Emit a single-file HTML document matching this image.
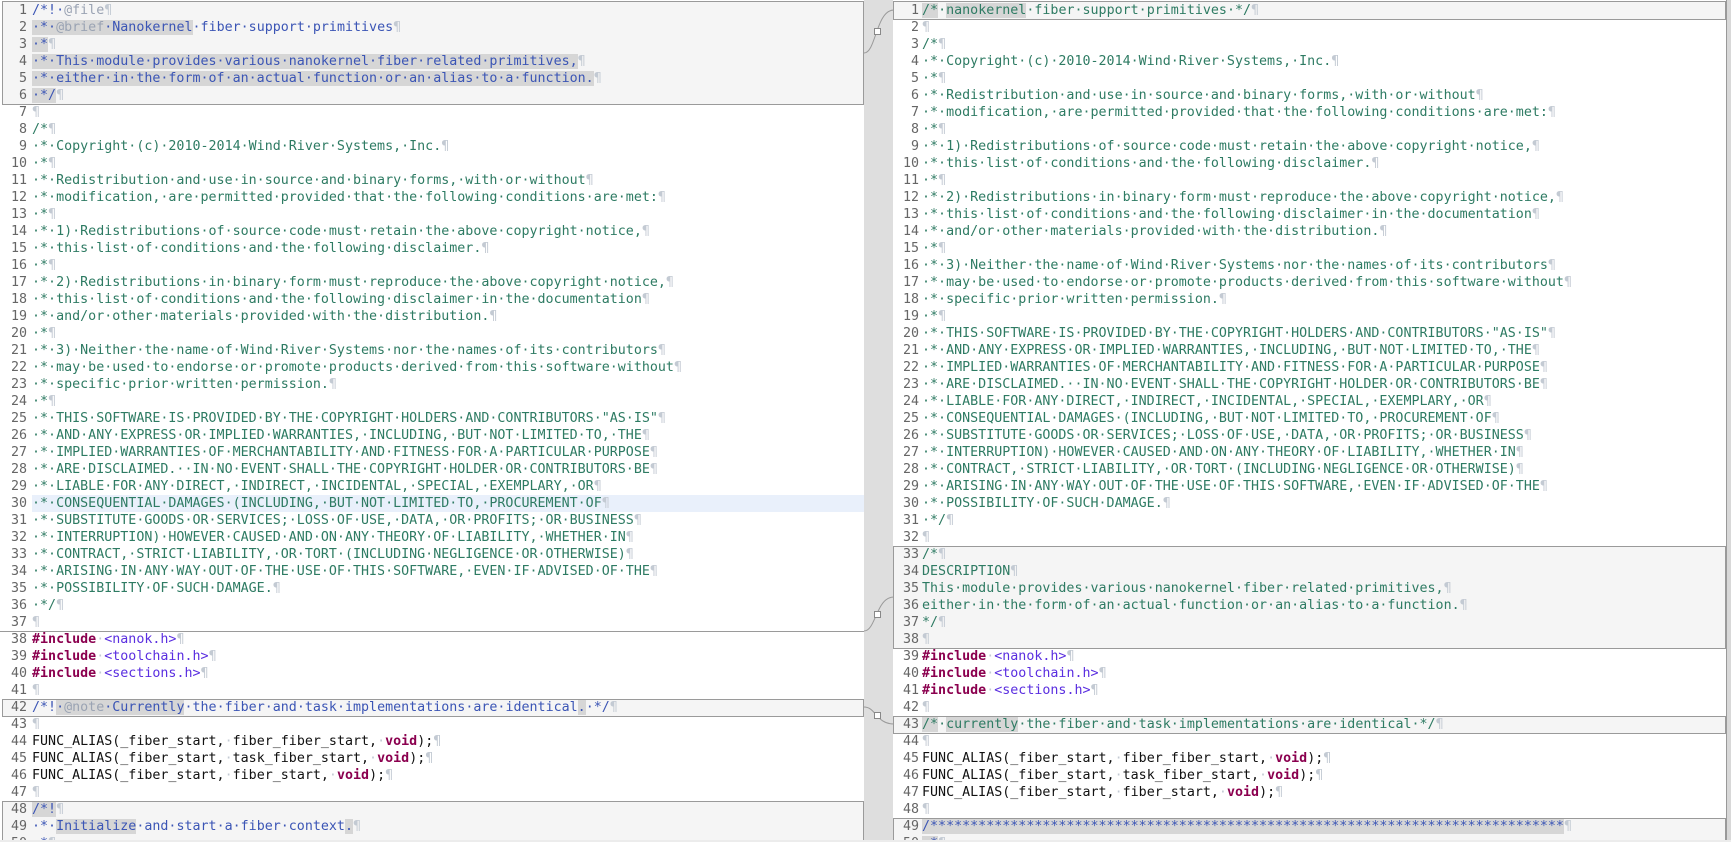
<!DOCTYPE html>
<html><head><meta charset="utf-8">
<style>
html,body{margin:0;padding:0;width:1731px;height:842px;overflow:hidden;background:#fff;}
body{position:relative;font-family:"DejaVu Sans Mono","Liberation Mono",monospace;font-size:13.33px;}
.pane{position:absolute;top:0;height:842px;overflow:hidden;background:#fff;}
.row{position:absolute;left:0;right:0;height:17px;line-height:17px;white-space:pre;}
.n{position:absolute;text-align:right;color:#666;}
.t{position:absolute;}
.c{color:#2e7b63}
.d{color:#3b55b5}
.g{color:#9aa3b3}
.p{color:#c3cad3}
.h{background:#d6d6d6}
.k{color:#8b004f;font-weight:bold}
.s{color:#5a2ee0}
.b{color:#111}
.box{position:absolute;background:#f5f5f5;border:1px solid #9a9a9a;box-sizing:border-box;}
#L .n{left:0;width:27px}
#L .t{left:32px}
#R .n{left:0;width:26px}
#R .t{left:29px}
</style></head><body>
<div style="position:absolute;left:862px;top:0;width:32px;height:842px;background:#dedede;border-left:1px solid #aaa;box-sizing:border-box"></div>
<svg style="position:absolute;left:862px;top:0" width="33" height="842">
<path d="M2 53 C14 53 14 10 32 10" stroke="#999" fill="none"/>
<rect x="12.5" y="28.5" width="6" height="6" fill="#fff" stroke="#888"/>
<path d="M2 631 C14 631 14 597 32 597" stroke="#999" fill="none"/>
<rect x="12.5" y="611.5" width="6" height="6" fill="#fff" stroke="#888"/>
<path d="M2 707 C14 707 14 724 32 724" stroke="#999" fill="none"/>
<rect x="12.5" y="712.5" width="6" height="6" fill="#fff" stroke="#888"/>
</svg>

<div class="pane" id="L" style="left:0;width:864px">
<div class="box" style="left:2px;top:1px;width:862px;height:104px"></div>
<div style="position:absolute;left:0;top:631px;width:864px;height:1px;background:#9a9a9a"></div>
<div class="box" style="left:2px;top:699px;width:862px;height:18px"></div>
<div class="box" style="left:2px;top:801px;width:862px;height:60px"></div>
<div style="position:absolute;left:32px;top:495px;width:832px;height:17px;background:#e9f0fb"></div>

<div class="row" style="top:2px"><span class="n">1</span><span class="t d">/*!·<span class="g">@file</span><span class="p">¶</span></span></div>
<div class="row" style="top:19px"><span class="n">2</span><span class="t d"><span class="h">·*·<span class="g">@brief</span>·Nanokernel</span>·fiber·support·primitives<span class="p">¶</span></span></div>
<div class="row" style="top:36px"><span class="n">3</span><span class="t d"><span class="h">·*</span><span class="p">¶</span></span></div>
<div class="row" style="top:53px"><span class="n">4</span><span class="t d"><span class="h">·*·This·module·provides·various·nanokernel·fiber·related·primitives,</span><span class="p">¶</span></span></div>
<div class="row" style="top:70px"><span class="n">5</span><span class="t d"><span class="h">·*·either·in·the·form·of·an·actual·function·or·an·alias·to·a·function.</span><span class="p">¶</span></span></div>
<div class="row" style="top:87px"><span class="n">6</span><span class="t d"><span class="h">·*/</span><span class="p">¶</span></span></div>
<div class="row" style="top:104px"><span class="n">7</span><span class="t"><span class="p">¶</span></span></div>
<div class="row" style="top:121px"><span class="n">8</span><span class="t c">/*<span class="p">¶</span></span></div>
<div class="row" style="top:138px"><span class="n">9</span><span class="t c">·*·Copyright·(c)·2010-2014·Wind·River·Systems,·Inc.<span class="p">¶</span></span></div>
<div class="row" style="top:155px"><span class="n">10</span><span class="t c">·*<span class="p">¶</span></span></div>
<div class="row" style="top:172px"><span class="n">11</span><span class="t c">·*·Redistribution·and·use·in·source·and·binary·forms,·with·or·without<span class="p">¶</span></span></div>
<div class="row" style="top:189px"><span class="n">12</span><span class="t c">·*·modification,·are·permitted·provided·that·the·following·conditions·are·met:<span class="p">¶</span></span></div>
<div class="row" style="top:206px"><span class="n">13</span><span class="t c">·*<span class="p">¶</span></span></div>
<div class="row" style="top:223px"><span class="n">14</span><span class="t c">·*·1)·Redistributions·of·source·code·must·retain·the·above·copyright·notice,<span class="p">¶</span></span></div>
<div class="row" style="top:240px"><span class="n">15</span><span class="t c">·*·this·list·of·conditions·and·the·following·disclaimer.<span class="p">¶</span></span></div>
<div class="row" style="top:257px"><span class="n">16</span><span class="t c">·*<span class="p">¶</span></span></div>
<div class="row" style="top:274px"><span class="n">17</span><span class="t c">·*·2)·Redistributions·in·binary·form·must·reproduce·the·above·copyright·notice,<span class="p">¶</span></span></div>
<div class="row" style="top:291px"><span class="n">18</span><span class="t c">·*·this·list·of·conditions·and·the·following·disclaimer·in·the·documentation<span class="p">¶</span></span></div>
<div class="row" style="top:308px"><span class="n">19</span><span class="t c">·*·and/or·other·materials·provided·with·the·distribution.<span class="p">¶</span></span></div>
<div class="row" style="top:325px"><span class="n">20</span><span class="t c">·*<span class="p">¶</span></span></div>
<div class="row" style="top:342px"><span class="n">21</span><span class="t c">·*·3)·Neither·the·name·of·Wind·River·Systems·nor·the·names·of·its·contributors<span class="p">¶</span></span></div>
<div class="row" style="top:359px"><span class="n">22</span><span class="t c">·*·may·be·used·to·endorse·or·promote·products·derived·from·this·software·without<span class="p">¶</span></span></div>
<div class="row" style="top:376px"><span class="n">23</span><span class="t c">·*·specific·prior·written·permission.<span class="p">¶</span></span></div>
<div class="row" style="top:393px"><span class="n">24</span><span class="t c">·*<span class="p">¶</span></span></div>
<div class="row" style="top:410px"><span class="n">25</span><span class="t c">·*·THIS·SOFTWARE·IS·PROVIDED·BY·THE·COPYRIGHT·HOLDERS·AND·CONTRIBUTORS·"AS·IS"<span class="p">¶</span></span></div>
<div class="row" style="top:427px"><span class="n">26</span><span class="t c">·*·AND·ANY·EXPRESS·OR·IMPLIED·WARRANTIES,·INCLUDING,·BUT·NOT·LIMITED·TO,·THE<span class="p">¶</span></span></div>
<div class="row" style="top:444px"><span class="n">27</span><span class="t c">·*·IMPLIED·WARRANTIES·OF·MERCHANTABILITY·AND·FITNESS·FOR·A·PARTICULAR·PURPOSE<span class="p">¶</span></span></div>
<div class="row" style="top:461px"><span class="n">28</span><span class="t c">·*·ARE·DISCLAIMED.··IN·NO·EVENT·SHALL·THE·COPYRIGHT·HOLDER·OR·CONTRIBUTORS·BE<span class="p">¶</span></span></div>
<div class="row" style="top:478px"><span class="n">29</span><span class="t c">·*·LIABLE·FOR·ANY·DIRECT,·INDIRECT,·INCIDENTAL,·SPECIAL,·EXEMPLARY,·OR<span class="p">¶</span></span></div>
<div class="row" style="top:495px"><span class="n">30</span><span class="t c">·*·CONSEQUENTIAL·DAMAGES·(INCLUDING,·BUT·NOT·LIMITED·TO,·PROCUREMENT·OF<span class="p">¶</span></span></div>
<div class="row" style="top:512px"><span class="n">31</span><span class="t c">·*·SUBSTITUTE·GOODS·OR·SERVICES;·LOSS·OF·USE,·DATA,·OR·PROFITS;·OR·BUSINESS<span class="p">¶</span></span></div>
<div class="row" style="top:529px"><span class="n">32</span><span class="t c">·*·INTERRUPTION)·HOWEVER·CAUSED·AND·ON·ANY·THEORY·OF·LIABILITY,·WHETHER·IN<span class="p">¶</span></span></div>
<div class="row" style="top:546px"><span class="n">33</span><span class="t c">·*·CONTRACT,·STRICT·LIABILITY,·OR·TORT·(INCLUDING·NEGLIGENCE·OR·OTHERWISE)<span class="p">¶</span></span></div>
<div class="row" style="top:563px"><span class="n">34</span><span class="t c">·*·ARISING·IN·ANY·WAY·OUT·OF·THE·USE·OF·THIS·SOFTWARE,·EVEN·IF·ADVISED·OF·THE<span class="p">¶</span></span></div>
<div class="row" style="top:580px"><span class="n">35</span><span class="t c">·*·POSSIBILITY·OF·SUCH·DAMAGE.<span class="p">¶</span></span></div>
<div class="row" style="top:597px"><span class="n">36</span><span class="t c">·*/<span class="p">¶</span></span></div>
<div class="row" style="top:614px"><span class="n">37</span><span class="t"><span class="p">¶</span></span></div>
<div class="row" style="top:631px"><span class="n">38</span><span class="t"><span class="k">#include</span><span class="p">·</span><span class="s">&lt;nanok.h&gt;</span><span class="p">¶</span></span></div>
<div class="row" style="top:648px"><span class="n">39</span><span class="t"><span class="k">#include</span><span class="p">·</span><span class="s">&lt;toolchain.h&gt;</span><span class="p">¶</span></span></div>
<div class="row" style="top:665px"><span class="n">40</span><span class="t"><span class="k">#include</span><span class="p">·</span><span class="s">&lt;sections.h&gt;</span><span class="p">¶</span></span></div>
<div class="row" style="top:682px"><span class="n">41</span><span class="t"><span class="p">¶</span></span></div>
<div class="row" style="top:699px"><span class="n">42</span><span class="t d">/*!<span class="h">·<span class="g">@note</span>·Currently</span>·the·fiber·and·task·implementations·are·identical<span class="h">.</span>·*/<span class="p">¶</span></span></div>
<div class="row" style="top:716px"><span class="n">43</span><span class="t"><span class="p">¶</span></span></div>
<div class="row" style="top:733px"><span class="n">44</span><span class="t b">FUNC_ALIAS(_fiber_start,<span class="p">·</span>fiber_fiber_start,<span class="p">·</span><span class="k">void</span>);<span class="p">¶</span></span></div>
<div class="row" style="top:750px"><span class="n">45</span><span class="t b">FUNC_ALIAS(_fiber_start,<span class="p">·</span>task_fiber_start,<span class="p">·</span><span class="k">void</span>);<span class="p">¶</span></span></div>
<div class="row" style="top:767px"><span class="n">46</span><span class="t b">FUNC_ALIAS(_fiber_start,<span class="p">·</span>fiber_start,<span class="p">·</span><span class="k">void</span>);<span class="p">¶</span></span></div>
<div class="row" style="top:784px"><span class="n">47</span><span class="t"><span class="p">¶</span></span></div>
<div class="row" style="top:801px"><span class="n">48</span><span class="t d"><span class="h">/*!</span><span class="p">¶</span></span></div>
<div class="row" style="top:818px"><span class="n">49</span><span class="t d">·*·<span class="h">Initialize</span>·and·start·a·fiber·context<span class="h">.</span><span class="p">¶</span></span></div>
<div class="row" style="top:835px"><span class="n">50</span><span class="t d">·*<span class="p">¶</span></span></div>
</div>

<div class="pane" id="R" style="left:893px;width:834px;border-right:1px solid #999;box-sizing:border-box">
<div class="box" style="left:0;top:1px;width:833px;height:19px"></div>
<div class="box" style="left:0;top:546px;width:833px;height:103px"></div>
<div class="box" style="left:0;top:716px;width:833px;height:18px"></div>
<div class="box" style="left:0;top:818px;width:833px;height:40px"></div>

<div class="row" style="top:2px"><span class="n">1</span><span class="t c"><span class="h">/*</span>·<span class="h">nanokernel</span>·fiber·support·primitives·*/<span class="p">¶</span></span></div>
<div class="row" style="top:19px"><span class="n">2</span><span class="t"><span class="p">¶</span></span></div>
<div class="row" style="top:36px"><span class="n">3</span><span class="t c">/*<span class="p">¶</span></span></div>
<div class="row" style="top:53px"><span class="n">4</span><span class="t c">·*·Copyright·(c)·2010-2014·Wind·River·Systems,·Inc.<span class="p">¶</span></span></div>
<div class="row" style="top:70px"><span class="n">5</span><span class="t c">·*<span class="p">¶</span></span></div>
<div class="row" style="top:87px"><span class="n">6</span><span class="t c">·*·Redistribution·and·use·in·source·and·binary·forms,·with·or·without<span class="p">¶</span></span></div>
<div class="row" style="top:104px"><span class="n">7</span><span class="t c">·*·modification,·are·permitted·provided·that·the·following·conditions·are·met:<span class="p">¶</span></span></div>
<div class="row" style="top:121px"><span class="n">8</span><span class="t c">·*<span class="p">¶</span></span></div>
<div class="row" style="top:138px"><span class="n">9</span><span class="t c">·*·1)·Redistributions·of·source·code·must·retain·the·above·copyright·notice,<span class="p">¶</span></span></div>
<div class="row" style="top:155px"><span class="n">10</span><span class="t c">·*·this·list·of·conditions·and·the·following·disclaimer.<span class="p">¶</span></span></div>
<div class="row" style="top:172px"><span class="n">11</span><span class="t c">·*<span class="p">¶</span></span></div>
<div class="row" style="top:189px"><span class="n">12</span><span class="t c">·*·2)·Redistributions·in·binary·form·must·reproduce·the·above·copyright·notice,<span class="p">¶</span></span></div>
<div class="row" style="top:206px"><span class="n">13</span><span class="t c">·*·this·list·of·conditions·and·the·following·disclaimer·in·the·documentation<span class="p">¶</span></span></div>
<div class="row" style="top:223px"><span class="n">14</span><span class="t c">·*·and/or·other·materials·provided·with·the·distribution.<span class="p">¶</span></span></div>
<div class="row" style="top:240px"><span class="n">15</span><span class="t c">·*<span class="p">¶</span></span></div>
<div class="row" style="top:257px"><span class="n">16</span><span class="t c">·*·3)·Neither·the·name·of·Wind·River·Systems·nor·the·names·of·its·contributors<span class="p">¶</span></span></div>
<div class="row" style="top:274px"><span class="n">17</span><span class="t c">·*·may·be·used·to·endorse·or·promote·products·derived·from·this·software·without<span class="p">¶</span></span></div>
<div class="row" style="top:291px"><span class="n">18</span><span class="t c">·*·specific·prior·written·permission.<span class="p">¶</span></span></div>
<div class="row" style="top:308px"><span class="n">19</span><span class="t c">·*<span class="p">¶</span></span></div>
<div class="row" style="top:325px"><span class="n">20</span><span class="t c">·*·THIS·SOFTWARE·IS·PROVIDED·BY·THE·COPYRIGHT·HOLDERS·AND·CONTRIBUTORS·"AS·IS"<span class="p">¶</span></span></div>
<div class="row" style="top:342px"><span class="n">21</span><span class="t c">·*·AND·ANY·EXPRESS·OR·IMPLIED·WARRANTIES,·INCLUDING,·BUT·NOT·LIMITED·TO,·THE<span class="p">¶</span></span></div>
<div class="row" style="top:359px"><span class="n">22</span><span class="t c">·*·IMPLIED·WARRANTIES·OF·MERCHANTABILITY·AND·FITNESS·FOR·A·PARTICULAR·PURPOSE<span class="p">¶</span></span></div>
<div class="row" style="top:376px"><span class="n">23</span><span class="t c">·*·ARE·DISCLAIMED.··IN·NO·EVENT·SHALL·THE·COPYRIGHT·HOLDER·OR·CONTRIBUTORS·BE<span class="p">¶</span></span></div>
<div class="row" style="top:393px"><span class="n">24</span><span class="t c">·*·LIABLE·FOR·ANY·DIRECT,·INDIRECT,·INCIDENTAL,·SPECIAL,·EXEMPLARY,·OR<span class="p">¶</span></span></div>
<div class="row" style="top:410px"><span class="n">25</span><span class="t c">·*·CONSEQUENTIAL·DAMAGES·(INCLUDING,·BUT·NOT·LIMITED·TO,·PROCUREMENT·OF<span class="p">¶</span></span></div>
<div class="row" style="top:427px"><span class="n">26</span><span class="t c">·*·SUBSTITUTE·GOODS·OR·SERVICES;·LOSS·OF·USE,·DATA,·OR·PROFITS;·OR·BUSINESS<span class="p">¶</span></span></div>
<div class="row" style="top:444px"><span class="n">27</span><span class="t c">·*·INTERRUPTION)·HOWEVER·CAUSED·AND·ON·ANY·THEORY·OF·LIABILITY,·WHETHER·IN<span class="p">¶</span></span></div>
<div class="row" style="top:461px"><span class="n">28</span><span class="t c">·*·CONTRACT,·STRICT·LIABILITY,·OR·TORT·(INCLUDING·NEGLIGENCE·OR·OTHERWISE)<span class="p">¶</span></span></div>
<div class="row" style="top:478px"><span class="n">29</span><span class="t c">·*·ARISING·IN·ANY·WAY·OUT·OF·THE·USE·OF·THIS·SOFTWARE,·EVEN·IF·ADVISED·OF·THE<span class="p">¶</span></span></div>
<div class="row" style="top:495px"><span class="n">30</span><span class="t c">·*·POSSIBILITY·OF·SUCH·DAMAGE.<span class="p">¶</span></span></div>
<div class="row" style="top:512px"><span class="n">31</span><span class="t c">·*/<span class="p">¶</span></span></div>
<div class="row" style="top:529px"><span class="n">32</span><span class="t"><span class="p">¶</span></span></div>
<div class="row" style="top:546px"><span class="n">33</span><span class="t c">/*<span class="p">¶</span></span></div>
<div class="row" style="top:563px"><span class="n">34</span><span class="t c">DESCRIPTION<span class="p">¶</span></span></div>
<div class="row" style="top:580px"><span class="n">35</span><span class="t c">This·module·provides·various·nanokernel·fiber·related·primitives,<span class="p">¶</span></span></div>
<div class="row" style="top:597px"><span class="n">36</span><span class="t c">either·in·the·form·of·an·actual·function·or·an·alias·to·a·function.<span class="p">¶</span></span></div>
<div class="row" style="top:614px"><span class="n">37</span><span class="t c">*/<span class="p">¶</span></span></div>
<div class="row" style="top:631px"><span class="n">38</span><span class="t"><span class="p">¶</span></span></div>
<div class="row" style="top:648px"><span class="n">39</span><span class="t"><span class="k">#include</span><span class="p">·</span><span class="s">&lt;nanok.h&gt;</span><span class="p">¶</span></span></div>
<div class="row" style="top:665px"><span class="n">40</span><span class="t"><span class="k">#include</span><span class="p">·</span><span class="s">&lt;toolchain.h&gt;</span><span class="p">¶</span></span></div>
<div class="row" style="top:682px"><span class="n">41</span><span class="t"><span class="k">#include</span><span class="p">·</span><span class="s">&lt;sections.h&gt;</span><span class="p">¶</span></span></div>
<div class="row" style="top:699px"><span class="n">42</span><span class="t"><span class="p">¶</span></span></div>
<div class="row" style="top:716px"><span class="n">43</span><span class="t c"><span class="h">/*</span>·<span class="h">currently</span>·the·fiber·and·task·implementations·are·identical·*/<span class="p">¶</span></span></div>
<div class="row" style="top:733px"><span class="n">44</span><span class="t"><span class="p">¶</span></span></div>
<div class="row" style="top:750px"><span class="n">45</span><span class="t b">FUNC_ALIAS(_fiber_start,<span class="p">·</span>fiber_fiber_start,<span class="p">·</span><span class="k">void</span>);<span class="p">¶</span></span></div>
<div class="row" style="top:767px"><span class="n">46</span><span class="t b">FUNC_ALIAS(_fiber_start,<span class="p">·</span>task_fiber_start,<span class="p">·</span><span class="k">void</span>);<span class="p">¶</span></span></div>
<div class="row" style="top:784px"><span class="n">47</span><span class="t b">FUNC_ALIAS(_fiber_start,<span class="p">·</span>fiber_start,<span class="p">·</span><span class="k">void</span>);<span class="p">¶</span></span></div>
<div class="row" style="top:801px"><span class="n">48</span><span class="t"><span class="p">¶</span></span></div>
<div class="row" style="top:818px"><span class="n">49</span><span class="t d"><span class="h">/*******************************************************************************</span><span class="p">¶</span></span></div>
<div class="row" style="top:835px"><span class="n">50</span><span class="t d"><span class="h">·*</span><span class="p">¶</span></span></div>
</div>
<div style="position:absolute;left:1727px;top:0;width:4px;height:842px;background:#d8d8d8"></div>
<div style="position:absolute;left:0;top:840px;width:1731px;height:2px;background:#ececec"></div>
</body></html>
